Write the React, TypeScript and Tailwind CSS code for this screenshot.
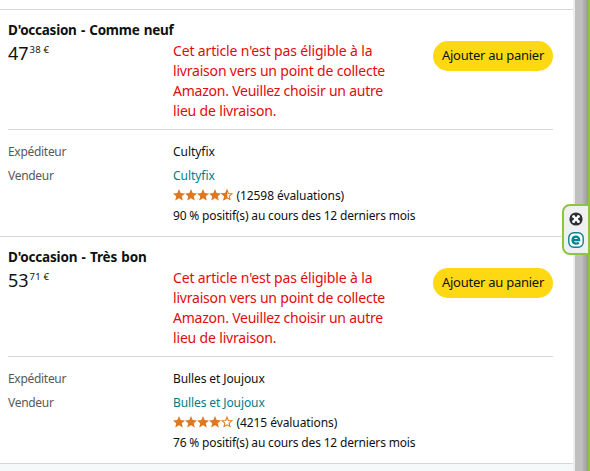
type Line = { text: string; spacing: string };

type Offer = {
  title: string;
  titleSpacing: string;
  whole: string;
  cents: string;
  seller: string;
  sellerSpacing: string;
  rating: number;
  reviews: string;
  positive: string;
};

const offers: Offer[] = [
  {
    title: "D'occasion - Comme neuf",
    titleSpacing: 'tracking-[-0.25px]',
    whole: '47',
    cents: '38 €',
    seller: 'Cultyfix',
    sellerSpacing: 'tracking-[-0.04px]',
    rating: 4.5,
    reviews: '(12598 évaluations)',
    positive: '90 % positif(s) au cours des 12 derniers mois',
  },
  {
    title: "D'occasion - Très bon",
    titleSpacing: 'tracking-[-0.19px]',
    whole: '53',
    cents: '71 €',
    seller: 'Bulles et Joujoux',
    sellerSpacing: 'tracking-[-0.1px]',
    rating: 4,
    reviews: '(4215 évaluations)',
    positive: '76 % positif(s) au cours des 12 derniers mois',
  },
];

const notice: Line[] = [
  { text: "Cet article n'est pas éligible à la", spacing: 'tracking-[-0.15px]' },
  { text: 'livraison vers un point de collecte', spacing: 'tracking-[-0.2px]' },
  { text: 'Amazon. Veuillez choisir un autre', spacing: 'tracking-[-0.23px]' },
  { text: 'lieu de livraison.', spacing: 'tracking-[-0.17px]' },
];

const STAR = 'M6 0 7.7 4 12 4.4 8.8 7.2 9.8 11.5 6 9.3 2.2 11.5 3.2 7.2 0 4.4 4.3 4Z';
const STAR_LEFT = 'M6.3 0V9.3L2.2 11.5 3.2 7.2 0 4.4 4.3 4Z';

function Star({ fill }: { fill: number }) {
  return (
    <svg className="h-3 w-3" viewBox="0 0 12 12">
      {fill >= 1 ? (
        <path d={STAR} fill="#de7921" />
      ) : (
        <>
          <path d="M6 1.2 7.3 4.5 10.9 4.8 8.2 7.1 9 10.5 6 8.8 3 10.5 3.8 7.1 1.1 4.8 4.7 4.5Z" fill="#fff" stroke="#de7921" strokeWidth="1.05" />
          {fill > 0 && <path d={STAR_LEFT} fill="#de7921" />}
        </>
      )}
    </svg>
  );
}

function OfferCard({ offer }: { offer: Offer }) {
  return (
    <section className="h-[227px] border-b border-[#d5d9d9] pl-2 pr-5 pt-[10px]">
      <h5 className={`h-5 whitespace-nowrap text-[13.5px] font-bold leading-5 [word-spacing:1px] ${offer.titleSpacing}`}>{offer.title}</h5>
      <div className="flex h-[90px] border-b border-[#d5d9d9]">
        <div className="flex w-[165px] items-start pt-px">
          <span className="text-[18px] leading-6">{offer.whole}</span>
          <span className="pt-[3px] pl-px text-[9.5px] leading-3 tracking-[0.15px]">{offer.cents}</span>
        </div>
        <div className="w-[260px] pt-px text-[14px] leading-5 text-[#e30a0a]">
          {notice.map((line) => (
            <p key={line.text} className={`whitespace-nowrap ${line.spacing}`}>{line.text}</p>
          ))}
        </div>
        <button className="mt-px h-[30px] w-[120px] shrink-0 whitespace-nowrap rounded-full bg-[#ffd814] pb-px text-[13px] leading-[29px] tracking-[-0.25px]">
          Ajouter au panier
        </button>
      </div>
      <div className="grid grid-cols-[165px_1fr] pt-3 text-[12px] leading-5">
        <span className="h-6 tracking-[-0.3px] text-[#565959]">Expéditeur</span>
        <span className={offer.sellerSpacing}>{offer.seller}</span>
        <span className="tracking-[-0.3px] text-[#565959]">Vendeur</span>
        <div className="whitespace-nowrap">
          <a className={`block text-[#007b8b] ${offer.sellerSpacing}`}>{offer.seller}</a>
          <div className="flex h-5 items-center">
            <span className="flex w-[63.5px] pb-[2px]">
              {[0, 1, 2, 3, 4].map((i) => (
                <Star key={i} fill={offer.rating - i} />
              ))}
            </span>
            <span className="tracking-[-0.08px]">{offer.reviews}</span>
          </div>
          <p className="tracking-[-0.17px]">{offer.positive}</p>
        </div>
      </div>
    </section>
  );
}

function SideWidget() {
  return (
    <div className="absolute left-[562px] top-[204px] flex h-[51px] w-[28px] flex-col items-center gap-[6px] rounded-l-lg border-2 border-[#8cc63f] bg-[#f0f0f0] pt-[6px]">
      <svg className="h-[14px] w-[14px]" viewBox="0 0 14 14">
        <circle cx="7" cy="7" r="6.6" fill="#2b3036" />
        <path d="m4.6 4.6 4.8 4.8m0-4.8-4.8 4.8" stroke="#fff" strokeWidth="2.2" />
        <g fill="#fff">
          <circle cx="4.6" cy="4.6" r="1.5" />
          <circle cx="9.4" cy="4.6" r="1.5" />
          <circle cx="4.6" cy="9.4" r="1.5" />
          <circle cx="9.4" cy="9.4" r="1.5" />
        </g>
      </svg>
      <svg className="h-4 w-4" viewBox="0 0 16 16">
        <rect x=".8" y=".8" width="14.4" height="14.4" rx="5" fill="#fff" stroke="#078391" strokeWidth="1.4" />
        <path d="M4.8 8.2h6.4c0-4.9-6.6-4.6-6.6 0 0 3.7 4.2 4.1 6.3 2.4" fill="none" stroke="#078391" strokeWidth="2.3" />
      </svg>
    </div>
  );
}

export default function App() {
  return (
    <main className="relative flex h-[471px] w-[590px] overflow-hidden bg-white font-['Noto_Sans',sans-serif] text-[#0f1111]">
      <div className="w-[573px]">
        <div className="h-[10px] border-b border-[#d5d9d9]" />
        {offers.map((offer) => (
          <OfferCard key={offer.title} offer={offer} />
        ))}
        <div className="h-[7px] bg-[#f5f9fa]" />
      </div>
      <div className="w-[2px] bg-[#eeeeee]" />
      <div className="w-[13px] bg-linear-to-r from-[#c0c0c0] from-50% to-[#999999]" />
      <div className="w-[2px] bg-[#8cc63f]" />
      <SideWidget />
    </main>
  );
}
